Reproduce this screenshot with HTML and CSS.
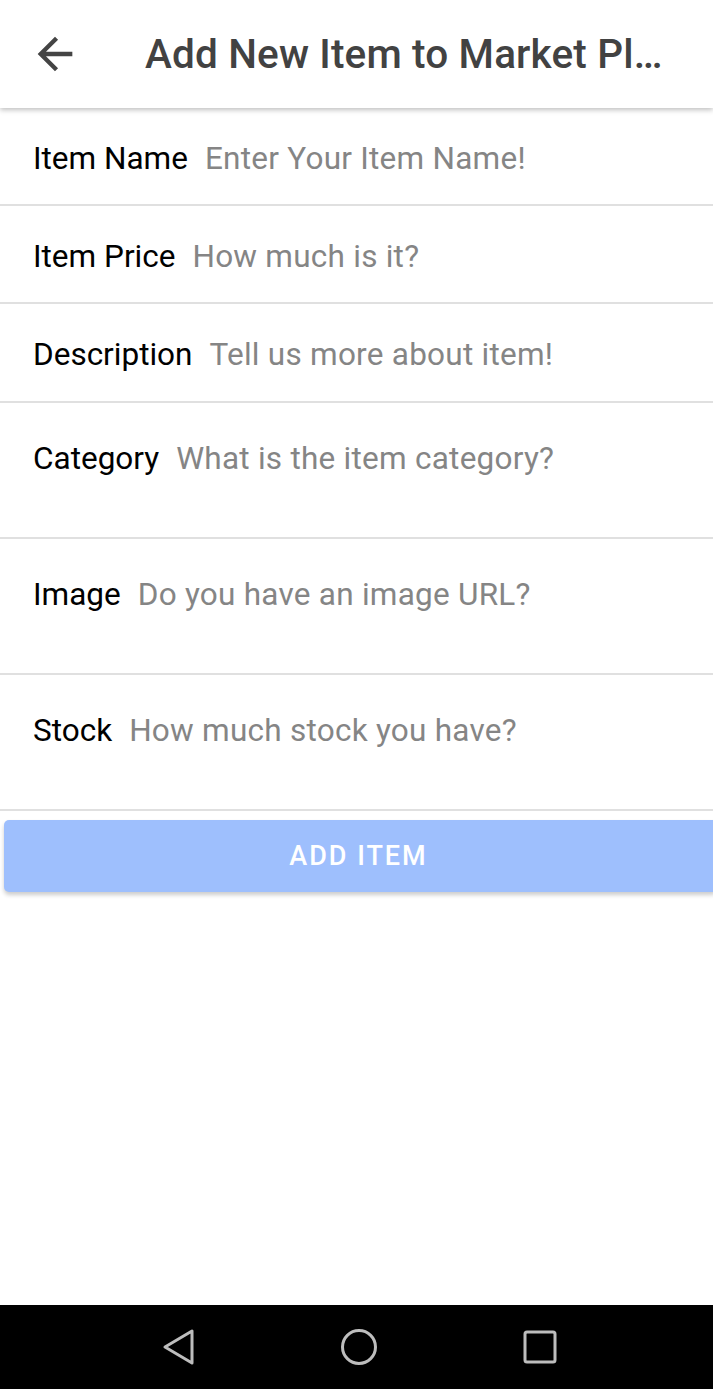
FILE: index.html
```html
<!DOCTYPE html>
<html>
<head>
<meta charset="utf-8">
<link rel="stylesheet" href="styles.css">
</head>
<body>
<div class="screen">
  <header class="appbar">
    <svg class="back" width="52" height="52" viewBox="0 0 24 24"><path d="M20 11H7.83l5.59-5.59L12 4l-8 8 8 8 1.41-1.41L7.83 13H20v-2z" fill="#444"/></svg>
    <h1 class="title">Add New Item to Market Pl…</h1>
  </header>
  <main class="form">
    <div class="row r1"><span class="label">Item Name</span><span class="hint">Enter Your Item Name!</span></div>
    <div class="row r2"><span class="label">Item Price</span><span class="hint">How much is it?</span></div>
    <div class="row r3"><span class="label">Description</span><span class="hint">Tell us more about item!</span></div>
    <div class="row tall"><span class="label">Category</span><span class="hint">What is the item category?</span></div>
    <div class="row tall"><span class="label">Image</span><span class="hint">Do you have an image URL?</span></div>
    <div class="row tall"><span class="label">Stock</span><span class="hint">How much stock you have?</span></div>
    <button class="add">ADD ITEM</button>
  </main>
  <nav class="navbar">
    <svg width="34" height="40" viewBox="0 0 34 40"><path d="M30 4 L30 36 L3 20 Z" fill="none" stroke="#bdbdbd" stroke-width="3" stroke-linejoin="round"/></svg>
    <svg width="38" height="38" viewBox="0 0 38 38"><circle cx="19" cy="19" r="16.5" fill="none" stroke="#bdbdbd" stroke-width="3"/></svg>
    <svg width="36" height="36" viewBox="0 0 36 36"><rect x="3" y="3" width="30" height="30" rx="2" fill="none" stroke="#bdbdbd" stroke-width="3"/></svg>
  </nav>
</div>
</body>
</html>
```

FILE: styles.css
```css
* { box-sizing: border-box; }
html, body { margin: 0; padding: 0; }
body { font-family: Roboto, "Noto Sans", sans-serif; background: #fff; }
.screen { width: 713px; height: 1389px; display: flex; flex-direction: column; overflow: hidden; }
.appbar {
  height: 108px; flex: none; display: flex; align-items: center;
  padding-left: 29px; padding-bottom: 1px; background: #fff;
  box-shadow: 0 2px 5px rgba(0,0,0,0.25);
  position: relative; z-index: 1;
}
.back { flex: none; }
.title {
  margin: 0 0 0 64px; font-weight: 500; font-size: 40.5px; color: #424242;
  white-space: nowrap; letter-spacing: 0.15px;
}
.form { flex: 1; display: flex; flex-direction: column; }
.row {
  height: 98px; border-bottom: 2px solid #e0e0e0; display: flex;
  align-items: center; padding-left: 33px; font-size: 31.5px; gap: 17px;
  padding-top: 4px;
}
.row.r3 { height: 99px; }
.row.tall { height: 136px; align-items: flex-start; padding-top: 37px; }
.label { color: #000; }
.hint { color: #858585; letter-spacing: 0.25px; }
.add {
  margin: 9px 0 0 4px; width: 713px; height: 72px; border: none; border-radius: 5px;
  background: #9ebffd; color: #fff; font-family: Roboto, sans-serif; font-weight: 500;
  font-size: 27px; letter-spacing: 2px; box-shadow: 0 3px 4px rgba(0,0,0,0.2);
  text-align: center; padding: 0 4px 0 0;
}
.navbar {
  margin-top: auto; height: 84px; background: #000; display: flex;
  align-items: center; justify-content: center; gap: 0; padding-left: 6px;
}
.navbar svg:nth-child(1) { margin-right: 144px; }
.navbar svg:nth-child(3) { margin-left: 144px; }
```
